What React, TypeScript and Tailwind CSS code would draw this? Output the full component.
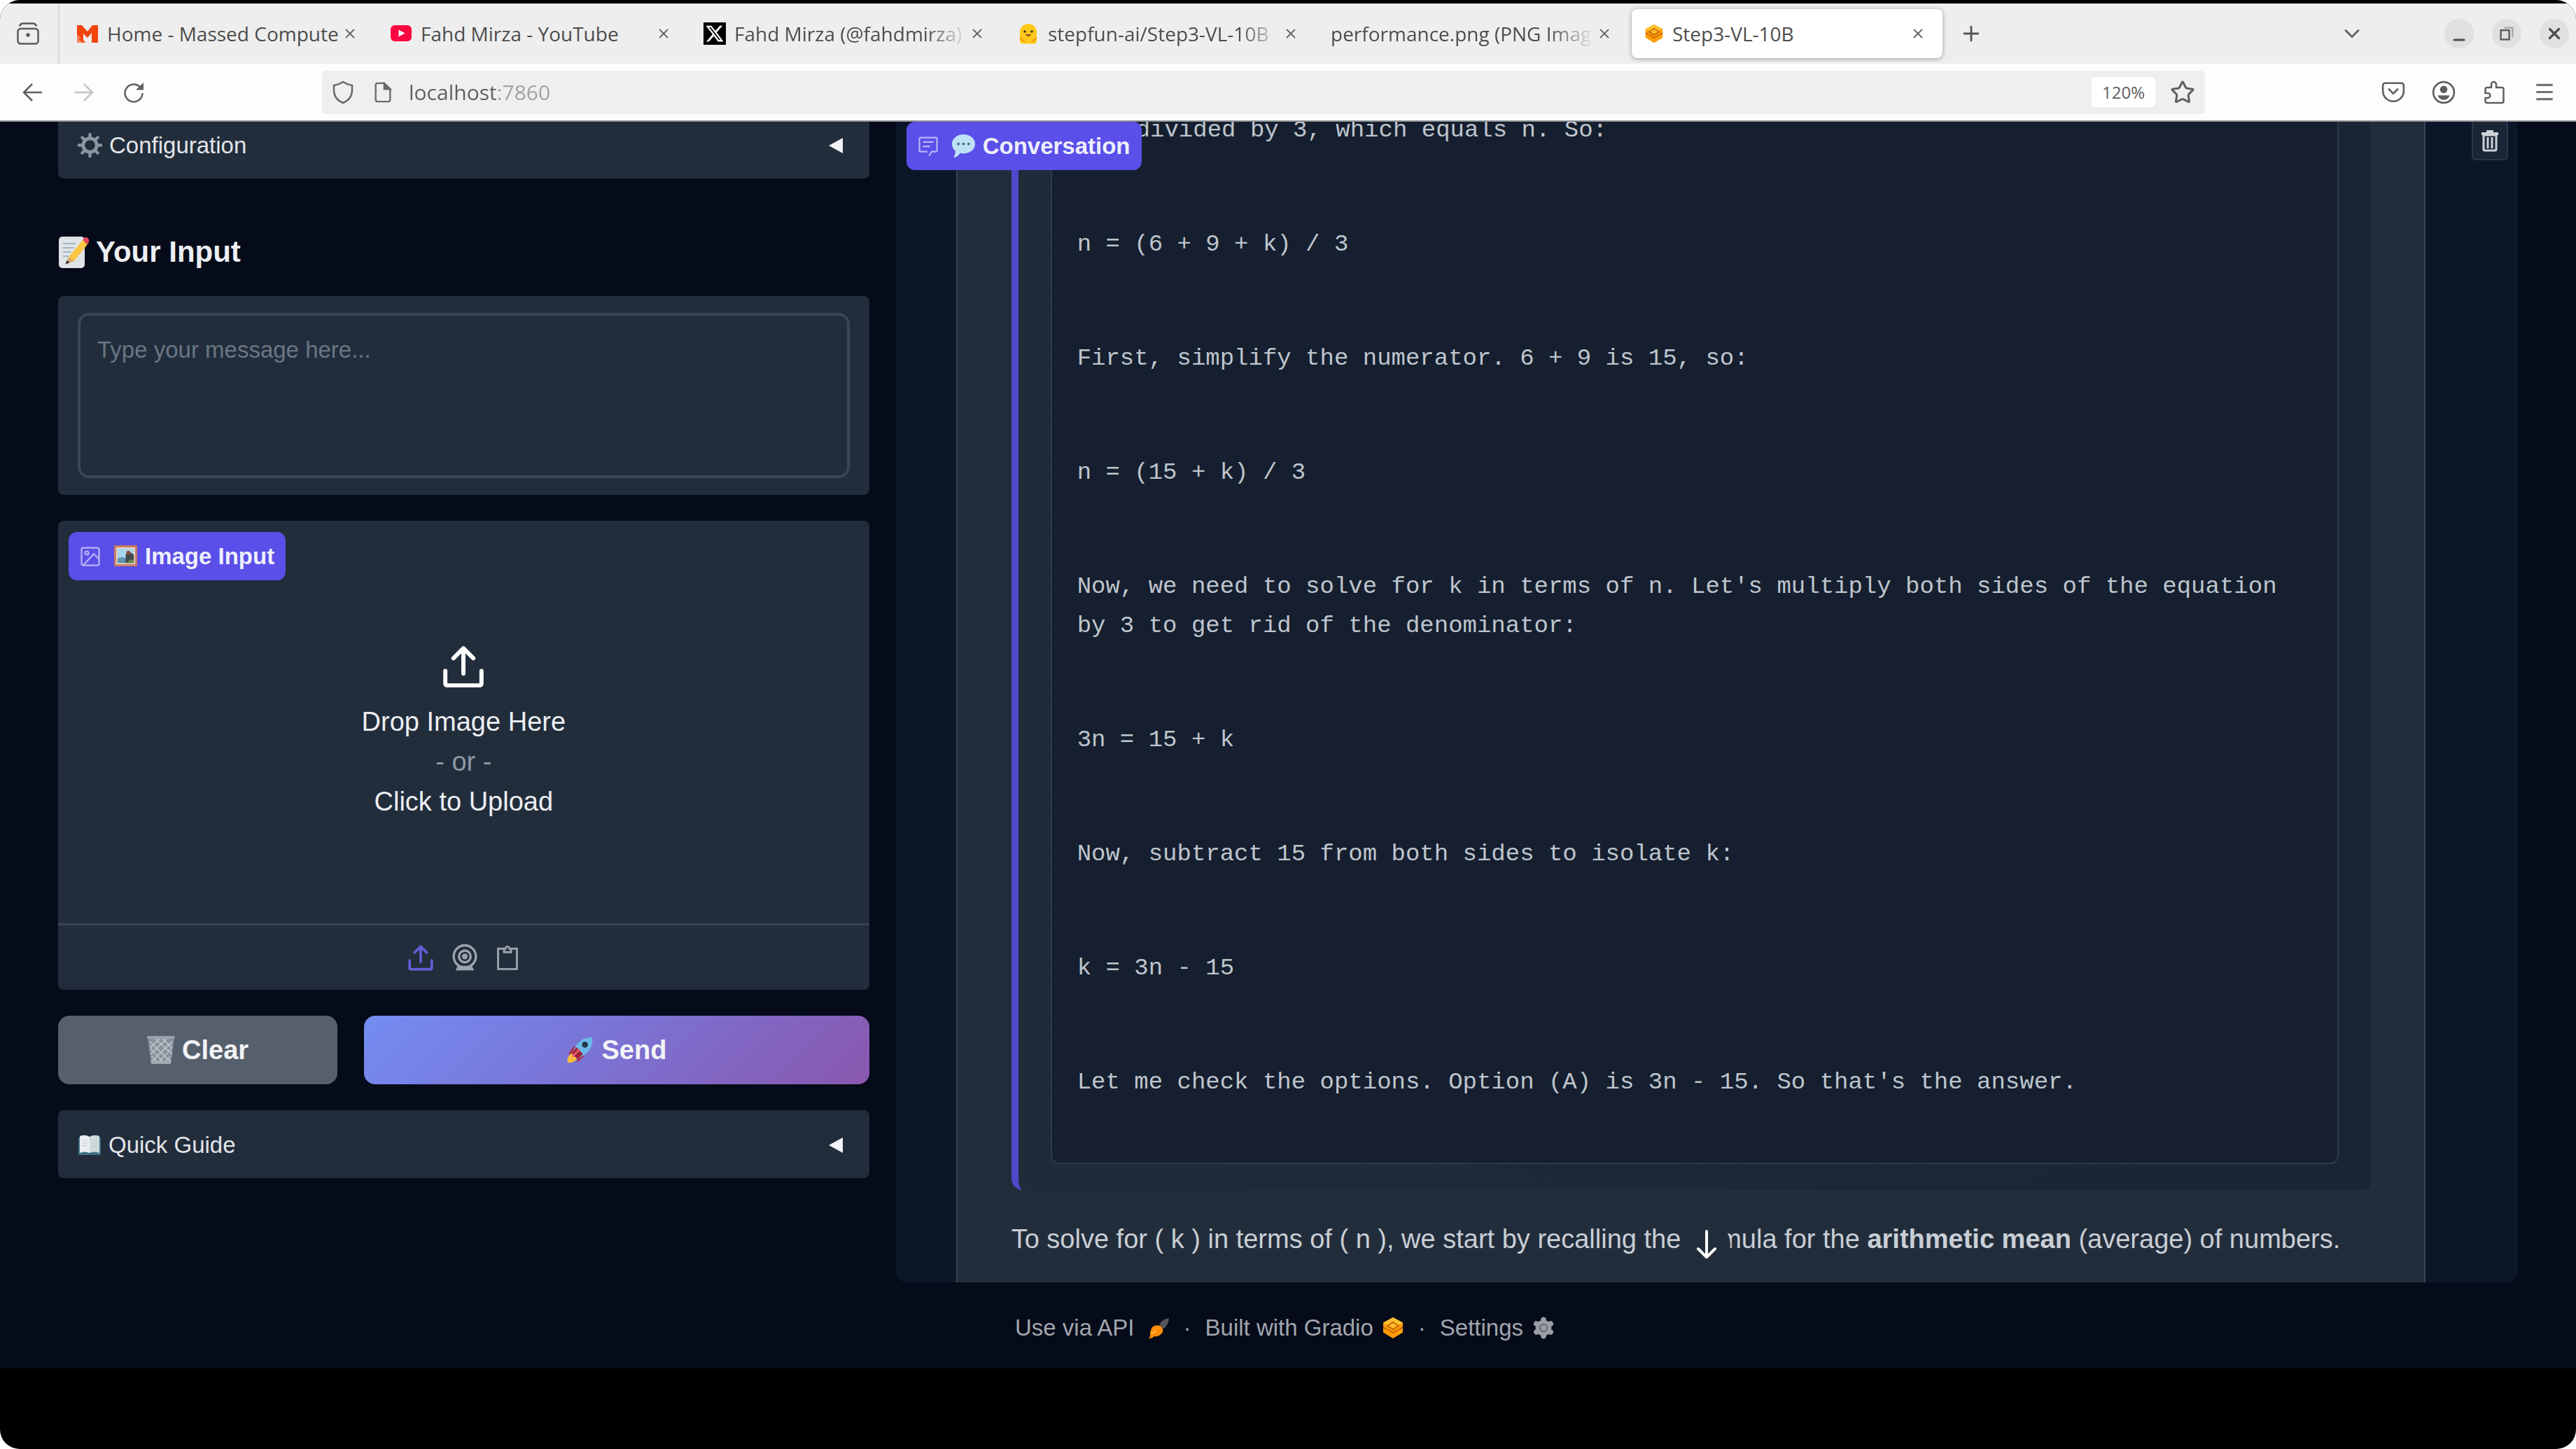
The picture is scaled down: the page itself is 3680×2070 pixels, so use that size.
import type { ReactNode, SVGProps } from 'react';
import { ChevronDown, Minus, Plus, Star, X } from 'lucide-react';
import { FaXTwitter } from 'react-icons/fa6';

type IconProps = SVGProps<SVGSVGElement>;

// ── Favicons ──

const MassedIcon = (p: IconProps) => (
  <svg viewBox="0 0 32 32" {...p}>
    <path d="M1 4h7l8 9 7-9h8v25h-9V15l-6 7-6-6v9l3 4H1z" fill="#f4450c" />
    <path d="M1 18l6 4-4 2 7 5H1z" fill="#ffb199" opacity=".6" />
  </svg>
);

const YouTubeIcon = (p: IconProps) => (
  <svg viewBox="0 0 32 32" {...p}>
    <rect x="1" y="4" width="30" height="23" rx="6" fill="#fb0742" />
    <path d="M12.500 10.500v10l9-5z" fill="#fff" />
  </svg>
);

const XSiteIcon = () => (
  <span className="flex size-8 items-center justify-center bg-black text-white">
    <FaXTwitter size={28} />
  </span>
);

const HuggingIcon = (p: IconProps) => (
  <svg viewBox="0 0 32 32" {...p}>
    <path d="M16 2c7 0 12 5 12 12v14c-2 3-7 3-12 2-5 1-10 1-12-2V14C4 7 9 2 16 2z" fill="#ffc81a" />
    <circle cx="11" cy="13" r="1.800" fill="#3a3320" />
    <circle cx="21" cy="13" r="1.800" fill="#3a3320" />
    <path d="M11.500 17q4.500 6 9 0z" fill="#8a4a1c" />
    <path d="M4 22l7 6M28 22l-7 6" stroke="#f3a00d" strokeWidth="2.500" fill="none" />
  </svg>
);

const GradioIcon = (p: IconProps) => (
  <svg viewBox="0 0 32 32" {...p}>
    <path d="M16 1l14 7.500v14L16 31 2 22.500v-14z" fill="#ff9d0a" />
    <path d="M16 1l14 7.500-14 8-14-8z" fill="#ffc02e" />
    <path d="M8 13l8-5 8 5-8 5zM8 18l8 5 8-5" fill="none" stroke="#c96a00" strokeWidth="2" />
    <path d="M2 15l5 3M30 15l-5 3" stroke="#a85a00" strokeWidth="1.500" />
  </svg>
);

// ── Emoji ──

const GearEmoji = ({ color = '#8b97a3', ...p }: IconProps) => (
  <svg viewBox="0 0 36 36" {...p}>
    <circle cx="18" cy="18" r="10" fill="none" stroke={color} strokeWidth="5" />
    <g stroke={color} strokeWidth="4.500" strokeLinecap="round">
      <path d="M18 5V2M18 31v3M5 18H2M31 18h3M8.800 8.800L6.700 6.700M27.200 27.200l2.100 2.100M8.800 27.200l-2.100 2.100M27.200 8.800l2.100-2.100" />
    </g>
  </svg>
);

const SettingsEmoji = (p: IconProps) => (
  <svg viewBox="0 0 36 36" {...p}>
    <g stroke="#9b9ea4" strokeWidth="8" strokeLinecap="round">
      <path d="M18 5.500v25M7.200 11.700l21.600 12.600M28.800 11.700L7.200 24.300" />
    </g>
    <circle cx="18" cy="18" r="12" fill="#9b9ea4" />
    <circle cx="18" cy="18" r="5.500" fill="none" stroke="#6d7077" strokeWidth="2.500" />
  </svg>
);

const MemoEmoji = (p: IconProps) => (
  <svg viewBox="0 0 44 48" {...p}>
    <rect x="1" y="2" width="37" height="45" rx="5" fill="#dfe4e6" />
    <path d="M7 12h18M7 18h16M7 24h12M7 30h8" stroke="#9fb6c4" strokeWidth="2" />
    <path d="M35 7l7 6-19 24-8-6z" fill="#fcc644" />
    <path d="M15 31l8 6-12 4z" fill="#d8a46c" />
    <path d="M12.500 36l4 3.200-6 2.300z" fill="#333" />
    <path d="M35 7q3-5 6-4 4 2 3 7l-2 3z" fill="#e8455b" />
  </svg>
);

const PictureEmoji = (p: IconProps) => (
  <svg viewBox="0 0 36 36" {...p}>
    <rect x="1" y="2" width="34" height="31" fill="#c77a62" />
    <rect x="4" y="5" width="28" height="25" fill="#e6d3c4" />
    <rect x="6" y="7" width="24" height="21" fill="#a9d5ef" />
    <path d="M6 22q7-5 13 0v6H6z" fill="#5d93ad" />
    <path d="M18 28V16q3-6 8-3l4 3v12z" fill="#3f4a4c" />
    <circle cx="22" cy="13" r="3" fill="#8d4a35" />
    <path d="M20 28q4-7 10-4v4z" fill="#6f8a4a" />
  </svg>
);

const BalloonEmoji = (p: IconProps) => (
  <svg viewBox="0 0 36 36" {...p}>
    <path d="M18 1c9.500 0 17 6 17 14s-7 14-16 14c-2 0-4 0-6-.800C11 32 7 35 3 35c2-2 3-6 3-9.500C3 23 1 19 1 15 1 7 8.500 1 18 1z" fill="#bfe1f5" />
    <circle cx="10.500" cy="15" r="2" fill="#4a6a82" />
    <circle cx="18" cy="15" r="2" fill="#4a6a82" />
    <circle cx="25.500" cy="15" r="2" fill="#4a6a82" />
  </svg>
);

const BinEmoji = (p: IconProps) => (
  <svg viewBox="0 0 40 42" {...p}>
    <path d="M1 3h38l-5 38H6z" fill="#87929c" />
    <path d="M4 9l30 29M12 5l24 22M22 5l14 13M5 19l20 21M7 30l9 10M36 9L6 38M28 5L5 27M18 5L4 18M35 19L15 40M33 30l-9 10" stroke="#b9c1c8" strokeWidth="1.800" />
    <rect x="0" y="1" width="40" height="4" rx="2" fill="#98a2ab" />
    <path d="M6 39h28" stroke="#a3adb5" strokeWidth="3" />
  </svg>
);

const RocketEmoji = (p: IconProps) => (
  <svg viewBox="0 0 42 42" {...p}>
    <path d="M10 17l9-4-8 13-8 1z" fill="#b3273a" />
    <path d="M25 32l5-9-13 9-1 8z" fill="#b3273a" />
    <path d="M2 40q-2-9 6-14l8 8q-5 7-14 6z" fill="#fdbb3c" />
    <path d="M39 2q2 15-10 25L17 35l-9-9 7-12Q25 1 39 2z" fill="#6cb9e8" />
    <path d="M17 35l-9-9 7-9 10 10z" fill="#a02036" />
    <path d="M20 20L9 31" stroke="#e4626d" strokeWidth="3" />
    <circle cx="28" cy="13" r="4.500" fill="#23384e" />
  </svg>
);

const BookEmoji = (p: IconProps) => (
  <svg viewBox="0 0 34 30" {...p}>
    <path d="M1 4h32v25H1z" fill="#3f7186" />
    <path d="M3 2q8-3 14 1v23q-7-3-14 0z" fill="#e9eef0" />
    <path d="M31 2q-8-3-14 1v23q7-3 14 0z" fill="#cfdadd" />
    <path d="M6 8h8M6 12h8M6 16h8M20 8h8M20 12h8M20 16h8" stroke="#c3ced2" strokeWidth="1" />
  </svg>
);

const ApiIcon = (p: IconProps) => (
  <svg viewBox="0 0 32 32" {...p}>
    <path d="M17 12q3-8 14-10-1 11-8 15z" fill="#55575c" />
    <path d="M8 14q7-4 13 1 4 7-3 11-3 3-8 2-4 4-8 3 3-3 2-6 0-6 4-11z" fill="#ff8d0a" />
    <path d="M6 24q4-1 6-4" stroke="#ffc14a" strokeWidth="2" fill="none" />
  </svg>
);

// ── Line icons ──

const UploadIcon = (p: IconProps) => (
  <svg viewBox="0 0 24 24" fill="none" stroke="currentColor" strokeWidth="2.300" strokeLinecap="round" strokeLinejoin="round" {...p}>
    <path d="M2 14.500v7a1 1 0 0 0 1 1h18a1 1 0 0 0 1-1v-7M12 2v14M6.500 7.500L12 2l5.500 5.500" />
  </svg>
);

const WebcamIcon = (p: IconProps) => (
  <svg viewBox="0 0 24 24" fill="none" stroke="currentColor" strokeWidth="2" {...p}>
    <circle cx="12" cy="11" r="9.500" />
    <circle cx="12" cy="11" r="5" />
    <circle cx="12" cy="11" r="1.500" fill="currentColor" />
    <path d="M6 19h12l2 4H4z" fill="currentColor" stroke="none" />
  </svg>
);

const ClipboardIcon = (p: IconProps) => (
  <svg viewBox="0 0 24 26" fill="none" stroke="currentColor" strokeWidth="2" {...p}>
    <path d="M8 4H2.500v20.500h19V4H16" />
    <path d="M8.500 7.500h7V4H14a2 2 0 0 0-4 0H8.500z" />
  </svg>
);

const ImageIcon = (p: IconProps) => (
  <svg viewBox="0 0 24 24" fill="none" stroke="currentColor" strokeWidth="1.800" {...p}>
    <rect x="2" y="2" width="20" height="20" rx="2" />
    <circle cx="8" cy="8" r="2" />
    <path d="M22 15l-6-6L4 22" />
  </svg>
);

const ChatIcon = (p: IconProps) => (
  <svg viewBox="0 0 24 24" fill="none" stroke="currentColor" strokeWidth="1.800" {...p}>
    <path d="M11 18H3a1 1 0 0 1-1-1V3a1 1 0 0 1 1-1h18a1 1 0 0 1 1 1v14a1 1 0 0 1-1 1h-5l-3 5M6 7h12M6 12h8" />
  </svg>
);

const TrashIcon = (p: IconProps) => (
  <svg viewBox="0 0 26 32" {...p}>
    <path d="M8 1h10v3h7v4H1V4h7z" fill="#ccd2d8" />
    <path d="M4 8h18v20a2 2 0 0 1-2 2H6a2 2 0 0 1-2-2z" fill="none" stroke="#ccd2d8" strokeWidth="3" />
    <path d="M10 11v16M16 11v16" stroke="#ccd2d8" strokeWidth="3" />
  </svg>
);

const RecentIcon = (p: IconProps) => (
  <svg viewBox="0 0 32 32" fill="none" stroke="#5b5b5b" strokeWidth="2.500" {...p}>
    <rect x="1.500" y="9" width="29" height="21.500" rx="4" />
    <path d="M4 5.500q1-4 5-4h14q4 0 5 4" />
    <circle cx="16" cy="18" r="1.500" fill="#5b5b5b" />
  </svg>
);

const ArrowIcon = ({ flip, ...p }: IconProps & { flip?: boolean }) => (
  <svg viewBox="0 0 30 30" fill="none" stroke="currentColor" strokeWidth="2.500" {...p}>
    <path d={flip ? 'M2 15h25M16 3l12 12-12 12' : 'M28 15H3M14 3L2 15l12 12'} />
  </svg>
);

const ReloadIcon = (p: IconProps) => (
  <svg viewBox="0 0 30 30" fill="none" stroke="currentColor" strokeWidth="2.500" {...p}>
    <path d="M25 8.500A12.500 12.500 0 1 0 27.500 16" />
    <path d="M29 1v10.500H18z" fill="currentColor" stroke="none" />
  </svg>
);

const ShieldIcon = (p: IconProps) => (
  <svg viewBox="0 0 32 34" fill="none" stroke="#6a6a6a" strokeWidth="2.500" {...p}>
    <path d="M16 2q6 4 13 5v7c0 9-6 15-13 18C9 29 3 23 3 14V7q7-1 13-5z" />
  </svg>
);

const PageIcon = (p: IconProps) => (
  <svg viewBox="0 0 26 32" fill="none" stroke="#6a6a6a" strokeWidth="2.500" {...p}>
    <path d="M5 2h10l9 9v16a3 3 0 0 1-3 3H5a3 3 0 0 1-3-3V5a3 3 0 0 1 3-3z" />
    <path d="M15 2v9h9z" fill="#6a6a6a" />
  </svg>
);

const PocketIcon = (p: IconProps) => (
  <svg viewBox="0 0 32 32" fill="none" stroke="currentColor" strokeWidth="2.500" {...p}>
    <path d="M5 3.500h22a3 3 0 0 1 3 3V14a14 14 0 0 1-28 0V6.500a3 3 0 0 1 3-3z" />
    <path d="M9.500 11l6.500 6.500 6.500-6.500" />
  </svg>
);

const AccountIcon = (p: IconProps) => (
  <svg viewBox="0 0 32 32" fill="none" stroke="currentColor" strokeWidth="2.500" {...p}>
    <circle cx="16" cy="16" r="14" />
    <circle cx="16" cy="12" r="5" fill="currentColor" stroke="none" />
    <path d="M8 20h16q-2 6-8 6t-8-6z" fill="currentColor" stroke="none" />
  </svg>
);

const PuzzleIcon = (p: IconProps) => (
  <svg viewBox="0 0 32 34" fill="none" stroke="currentColor" strokeWidth="2.500" {...p}>
    <path d="M12 10V5.500a3.500 3.500 0 0 1 7 0V10h8a2.500 2.500 0 0 1 2.500 2.500v17A2.500 2.500 0 0 1 27 32H6a2.500 2.500 0 0 1-2.500-2.500V25H7a3.500 3.500 0 0 0 0-7H3.500v-5.500A2.500 2.500 0 0 1 6 10z" />
  </svg>
);

const MenuIcon = (p: IconProps) => (
  <svg viewBox="0 0 32 32" stroke="#747474" strokeWidth="3" {...p}>
    <path d="M5 6h22M5 15.500h22M5 25h22" />
  </svg>
);

const RestoreIcon = (p: IconProps) => (
  <svg viewBox="0 0 20 20" fill="none" stroke="#5a5a5a" strokeWidth="2" {...p}>
    <rect x="3" y="6" width="10" height="11" />
    <path d="M7 3h10v11" stroke="#a5a5a5" />
  </svg>
);

const DownArrowIcon = (p: IconProps) => (
  <svg viewBox="0 0 30 42" fill="none" stroke="#fff" strokeWidth="4" strokeLinecap="round" strokeLinejoin="round" {...p}>
    <path d="M15 2v37M3 27l12 12 12-12" />
  </svg>
);

// ── Browser chrome ──

interface Tab {
  title: string;
  icon?: ReactNode;
  active?: boolean;
  faded?: boolean;
}

const tabs: Tab[] = [
  { title: 'Home - Massed Compute', icon: <MassedIcon className="size-8" /> },
  { title: 'Fahd Mirza - YouTube', icon: <YouTubeIcon className="size-8" /> },
  { title: 'Fahd Mirza (@fahdmirza)', icon: <XSiteIcon />, faded: true },
  { title: 'stepfun-ai/Step3-VL-10B', icon: <HuggingIcon className="size-8" />, faded: true },
  { title: 'performance.png (PNG Imag', faded: true },
  { title: 'Step3-VL-10B', icon: <GradioIcon className="size-7" />, active: true },
];

function TabStrip() {
  return (
    <div className="flex h-[86px] items-center bg-[#eeeeee] pr-2.5">
      <button aria-label="Recent browsing" className="flex h-full w-[85px] items-center justify-center border-r-2 border-[#d6d6d6] pr-1">
        <RecentIcon className="size-8" />
      </button>
      <div className="flex gap-1 pl-1.5">
        {tabs.map((tab) => (
          <div
            key={tab.title}
            className={`flex h-[70px] w-[444px] items-center gap-3 rounded-lg pr-6 pl-[18px] ${tab.active ? 'bg-white shadow-[0_1px_6px_rgba(0,0,0,0.35)]' : ''}`}
          >
            {tab.icon}
            <span
              className={`min-w-0 flex-1 overflow-hidden text-[28px] whitespace-nowrap text-[#4d4d4d] ${tab.faded ? '[mask-image:linear-gradient(to_right,black_82%,transparent)]' : ''}`}
            >
              {tab.title}
            </span>
            <button aria-label={`Close ${tab.title}`} className="-ml-2.5">
              <X size={22} strokeWidth={2} className="text-[#666]" />
            </button>
          </div>
        ))}
      </div>
      <button aria-label="New tab" className="ml-6">
        <Plus size={34} strokeWidth={2} className="text-[#555]" />
      </button>
      <button aria-label="List all tabs" className="mr-[114px] ml-auto">
        <ChevronDown size={36} strokeWidth={2} className="text-[#666]" />
      </button>
      <div className="flex gap-[26px] text-[#4d4d4d]">
        <button aria-label="Minimize" className="flex size-[42px] items-end justify-center rounded-full bg-[#e0e0e0]">
          <Minus size={24} strokeWidth={3} />
        </button>
        <button aria-label="Restore" className="flex size-[42px] items-center justify-center rounded-full bg-[#e0e0e0]">
          <RestoreIcon className="size-6" />
        </button>
        <button aria-label="Close window" className="flex size-[42px] items-center justify-center rounded-full bg-[#e0e0e0]">
          <X size={26} strokeWidth={3} />
        </button>
      </div>
    </div>
  );
}

function Toolbar() {
  return (
    <div className="flex h-[83px] items-center border-b-2 border-[#8a8d92] bg-[#fdfdfd] pr-7 pl-8 text-[#5f5f5f]">
      <div className="flex gap-[42px]">
        <button aria-label="Back"><ArrowIcon className="size-[30px]" /></button>
        <button aria-label="Forward" className="text-[#c4c4c4]"><ArrowIcon flip className="size-[30px]" /></button>
        <button aria-label="Reload"><ReloadIcon className="size-[30px]" /></button>
      </div>
      <div className="ml-[254px] flex h-[62px] flex-1 items-center rounded-md bg-[#efefef] pr-3.5 pl-3.5">
        <ShieldIcon className="h-[34px] w-8" />
        <PageIcon className="ml-7 h-[30px] w-[26px]" />
        <input
          aria-label="Address"
          defaultValue="localhost:7860"
          className="ml-6 min-w-0 flex-1 bg-[linear-gradient(to_right,#5f5f5f_126px,#a0a0a0_126px)] bg-clip-text text-[30px] text-transparent outline-none"
        />
        <button className="flex h-[43px] w-[91px] items-center justify-center rounded-md bg-white text-2xl">120%</button>
        <button aria-label="Bookmark this page" className="ml-[21px]">
          <Star size={36} strokeWidth={2} />
        </button>
      </div>
      <div className="ml-[252px] flex gap-[38px]">
        <button aria-label="Save to Pocket"><PocketIcon className="size-[34px]" /></button>
        <button aria-label="Account"><AccountIcon className="size-[34px]" /></button>
        <button aria-label="Extensions"><PuzzleIcon className="size-[34px]" /></button>
        <button aria-label="Menu"><MenuIcon className="size-[34px]" /></button>
      </div>
    </div>
  );
}

// ── App panels ──

function Accordion({ icon, label }: { icon: ReactNode; label: string }) {
  return (
    <button className="flex h-[97px] w-full items-center gap-2.5 rounded-lg bg-[#222d3c] pt-0.5 pr-[38px] pl-7 text-[33px] text-[#e3e5e9]">
      {icon}
      <span>{label}</span>
      <svg viewBox="0 0 20 22" className="ml-auto h-[22px] w-5">
        <path d="M0 11L20 0v22z" fill="#f1f3f5" />
      </svg>
    </button>
  );
}

function BlockLabel({ icon, emoji, children }: { icon: ReactNode; emoji: ReactNode; children: ReactNode }) {
  return (
    <div className="absolute top-4 left-[15px] flex h-[69px] items-center rounded-xl bg-[#5a4fe8] px-4 text-[33px] font-bold text-[#eeeffc]">
      <span className="text-[#b9b5f7]">{icon}</span>
      <span className="mr-2.5 ml-[18px]">{emoji}</span>
      {children}
    </div>
  );
}

function InputColumn() {
  return (
    <div className="flex flex-col gap-[37px]">
      <Accordion icon={<GearEmoji className="size-[35px]" />} label="Configuration" />

      <h3 className="flex items-center gap-2.5 pt-[42px] text-[42px]/[52px] font-bold text-[#eceef1]">
        <MemoEmoji className="h-12 w-11" />
        Your Input
      </h3>

      <div className="rounded-lg bg-[#222d3c] px-7 py-6">
        <textarea
          aria-label="Your Input"
          placeholder="Type your message here..."
          className="block h-[236px] w-full resize-none rounded-2xl border-4 border-[#3a4654] bg-[#212d3c] px-6 py-6 text-[33px]/[50px] text-[#e3e5e9] outline-none placeholder:text-[#6b7682]"
        />
      </div>

      <div className="relative rounded-lg bg-[#222d3c]">
        <BlockLabel icon={<ImageIcon className="size-[30px]" />} emoji={<PictureEmoji className="size-[35px]" />}>
          Image Input
        </BlockLabel>
        <button className="flex h-[575px] w-full flex-col items-center justify-center pt-8 text-[38px]/[57px] text-[#eceef1]">
          <UploadIcon className="mb-5 size-[62px] text-white" />
          <span>Drop Image Here</span>
          <span className="text-[#8e98a4]">- or -</span>
          <span>Click to Upload</span>
        </button>
        <div className="flex h-[95px] items-center justify-center gap-6 border-t-[3px] border-[#384452] text-[#9ca4ae]">
          <button aria-label="Upload file" className="text-[#625fd6]"><UploadIcon className="size-[38px]" /></button>
          <button aria-label="Capture from camera"><WebcamIcon className="size-10" /></button>
          <button aria-label="Paste from clipboard"><ClipboardIcon className="h-10 w-[34px]" /></button>
        </div>
      </div>

      <div className="grid grid-cols-[399fr_721fr] gap-[38px] text-[38px] font-bold text-[#f2f3f6]">
        <button className="flex h-[98px] items-center justify-center gap-2.5 rounded-2xl bg-[#56606c]">
          <BinEmoji className="h-[42px] w-10" />
          Clear
        </button>
        <button className="flex h-[98px] items-center justify-center gap-2.5 rounded-2xl bg-[linear-gradient(135deg,#748df2_0%,#7a74d6_45%,#8957ad_100%)]">
          <RocketEmoji className="size-10" />
          Send
        </button>
      </div>

      <Accordion icon={<BookEmoji className="h-[30px] w-[34px]" />} label="Quick Guide" />
    </div>
  );
}

const reasoning = [
  'divided by 3, which equals n. So:',
  'n = (6 + 9 + k) / 3',
  'First, simplify the numerator. 6 + 9 is 15, so:',
  'n = (15 + k) / 3',
  "Now, we need to solve for k in terms of n. Let's multiply both sides of the equation by 3 to get rid of the denominator:",
  '3n = 15 + k',
  'Now, subtract 15 from both sides to isolate k:',
  'k = 3n - 15',
  "Let me check the options. Option (A) is 3n - 15. So that's the answer.",
];

function Conversation() {
  return (
    <div className="relative overflow-hidden rounded-b-2xl bg-[#0b1729] pr-[132px] pl-[86px]">
      <div className="border-x-2 border-[#384452] bg-[#222d3c] px-[77px] pb-8">
        <div className="rounded-bl-2xl rounded-br-lg border-l-[10px] border-[#4f48c8] bg-linear-to-r from-[#202b3a] to-[#192435] pr-[45px] pb-[37px] pl-[46px]">
          <div className="flex flex-col gap-[107px] rounded-b-xl border-x-2 border-b-2 border-[#2e3a49] bg-[#151f2f] px-9 pb-[87px] font-['Liberation_Mono',monospace] text-[34px]/[56px] text-[#bfc5cd]">
            {reasoning.map((line) => (
              <p key={line} className="first:indent-[84px]">{line}</p>
            ))}
          </div>
        </div>
        <p className="mt-10 text-[38px]/[60px] whitespace-nowrap text-[#c9ced5]">
          To solve for ( k ) in terms of ( n ), we start by recalling the formula for the{' '}
          <strong>arithmetic mean</strong> (average) of numbers.
        </p>
      </div>

      <BlockLabel icon={<ChatIcon className="size-[30px]" />} emoji={<BalloonEmoji className="size-[35px]" />}>
        Conversation
      </BlockLabel>
      <button aria-label="Clear conversation" className="absolute top-3.5 right-3.5 flex h-[57px] w-[52px] items-center justify-center rounded-b-md border-2 border-[#2b3746] bg-[#1a2635]">
        <TrashIcon className="h-8 w-[26px]" />
      </button>
      <button aria-label="Scroll to bottom" className="absolute bottom-5 left-1/2 flex size-[68px] -translate-x-1/2 items-center justify-center rounded-full bg-[#222d3c]">
        <DownArrowIcon className="h-[42px] w-[30px]" />
      </button>
    </div>
  );
}

function Footer() {
  return (
    <footer className="flex items-center justify-center gap-5 pt-10 pr-2 pb-[33px] text-[33px]/[50px] text-[#a2a5ad]">
      <a href="#api" className="flex items-center gap-[18px]">
        Use via API <ApiIcon className="size-8" />
      </a>
      <span>·</span>
      <a href="#gradio" className="flex items-center gap-3">
        Built with Gradio <GradioIcon className="size-8" />
      </a>
      <span>·</span>
      <a href="#settings" className="flex items-center gap-3">
        Settings <SettingsEmoji className="size-[34px]" />
      </a>
    </footer>
  );
}

export default function App() {
  return (
    <div className="min-h-screen bg-white">
      <div className="flex min-h-screen flex-col overflow-hidden rounded-[28px] bg-black">
        <header className="pt-[5px] font-['Open_Sans',sans-serif]">
          <TabStrip />
          <Toolbar />
        </header>

        <main className="overflow-hidden bg-[#050b19] font-['Liberation_Sans',sans-serif]">
          {/* page is scrolled a little, so the top row sits under the toolbar */}
          <div className="-mt-4 px-[83px]">
            <div className="grid grid-cols-[1fr_2fr] gap-[38px]">
              <InputColumn />
              <Conversation />
            </div>
            <Footer />
          </div>
        </main>
      </div>
    </div>
  );
}
